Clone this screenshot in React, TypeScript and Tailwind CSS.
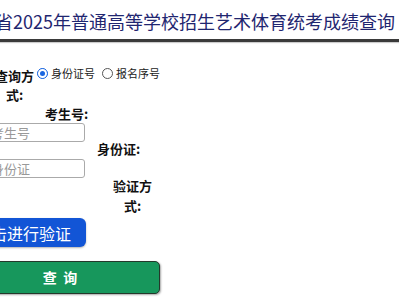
import { useState } from 'react';

const cjk = { fontFamily: '"Noto Sans CJK SC", "Microsoft YaHei", sans-serif' };

function Radio({ checked, label, onClick }: { checked: boolean; label: string; onClick: () => void }) {
  return (
    <button onClick={onClick} className="flex items-center gap-[3px] text-[11px] text-[#222] leading-none">
      <span
        className={`w-[11px] h-[11px] rounded-full border flex items-center justify-center ${
          checked ? 'border-[#1a66e0] bg-[#1a66e0]' : 'border-[#555] bg-white'
        }`}
      >
        {checked && <span className="w-[5px] h-[5px] rounded-full bg-[#1a66e0] ring-2 ring-white" />}
      </span>
      <span>{label}</span>
    </button>
  );
}

export default function App() {
  const [mode, setMode] = useState<'id' | 'seq'>('id');

  return (
    <div className="w-[399px] h-[300px] overflow-hidden bg-white" style={cjk}>
      {/* Title */}
      <div className="h-[42px] flex items-center border-b-[3px] border-[#3a3a3a] shadow-[0_1px_1px_rgba(0,0,0,0.2)]">
        <h1 className="-ml-[5px] text-[18px] text-[#1f2670] whitespace-nowrap leading-none pt-[2px]">
          省2025年普通高等学校招生艺术体育统考成绩查询
        </h1>
      </div>

      {/* Query mode */}
      <div className="flex items-start mt-[24px]">
        <div className="-ml-[7px] w-[43px] text-center text-[13px] font-bold leading-[19px] text-[#111]">查询方式:</div>
        <div className="flex items-center gap-[7px] ml-[1px] mt-[2px]">
          <Radio checked={mode === 'id'} label="身份证号" onClick={() => setMode('id')} />
          <Radio checked={mode === 'seq'} label="报名序号" onClick={() => setMode('seq')} />
        </div>
      </div>

      {/* Candidate number */}
      <div className="ml-[45px] mt-[2px] text-[13px] font-bold leading-[16px] text-[#111]">考生号:</div>

      <div className="flex items-center mt-[1px]">
        <div className="flex flex-col gap-[17px] -ml-[12px]">
          <input
            placeholder="考生号"
            className="w-[97px] h-[19px] border border-[#aaa] rounded-[3px] px-[2px] text-[13px] text-[#333] placeholder:text-[#999] outline-none"
          />
          <input
            placeholder="身份证"
            className="w-[97px] h-[19px] border border-[#aaa] rounded-[3px] px-[2px] text-[13px] text-[#333] placeholder:text-[#999] outline-none"
          />
        </div>
        <div className="ml-[12px] -mt-[4px] text-[13px] font-bold text-[#111] leading-none">身份证:</div>
      </div>

      {/* Verification */}
      <div className="ml-[110px] -mt-[2px] w-[45px] text-center text-[13px] font-bold leading-[20px] text-[#111]">验证方式:</div>

      <div className="mt-[2px] flex flex-col items-start">
        <button className="-ml-[40px] w-[126px] h-[29px] rounded-[6px] bg-[#1255d6] text-white text-[16px] shadow-[0_1px_2px_rgba(0,0,0,0.3)]">
          点击进行验证
        </button>
        <button className="mt-[14px] -ml-[40px] w-[200px] h-[33px] rounded-[5px] bg-[#17975c] border border-[#24382b] text-white text-[14px] font-bold shadow-[1px_1px_2px_rgba(0,0,0,0.35)]">
          查&nbsp;&nbsp;询
        </button>
      </div>
    </div>
  );
}
